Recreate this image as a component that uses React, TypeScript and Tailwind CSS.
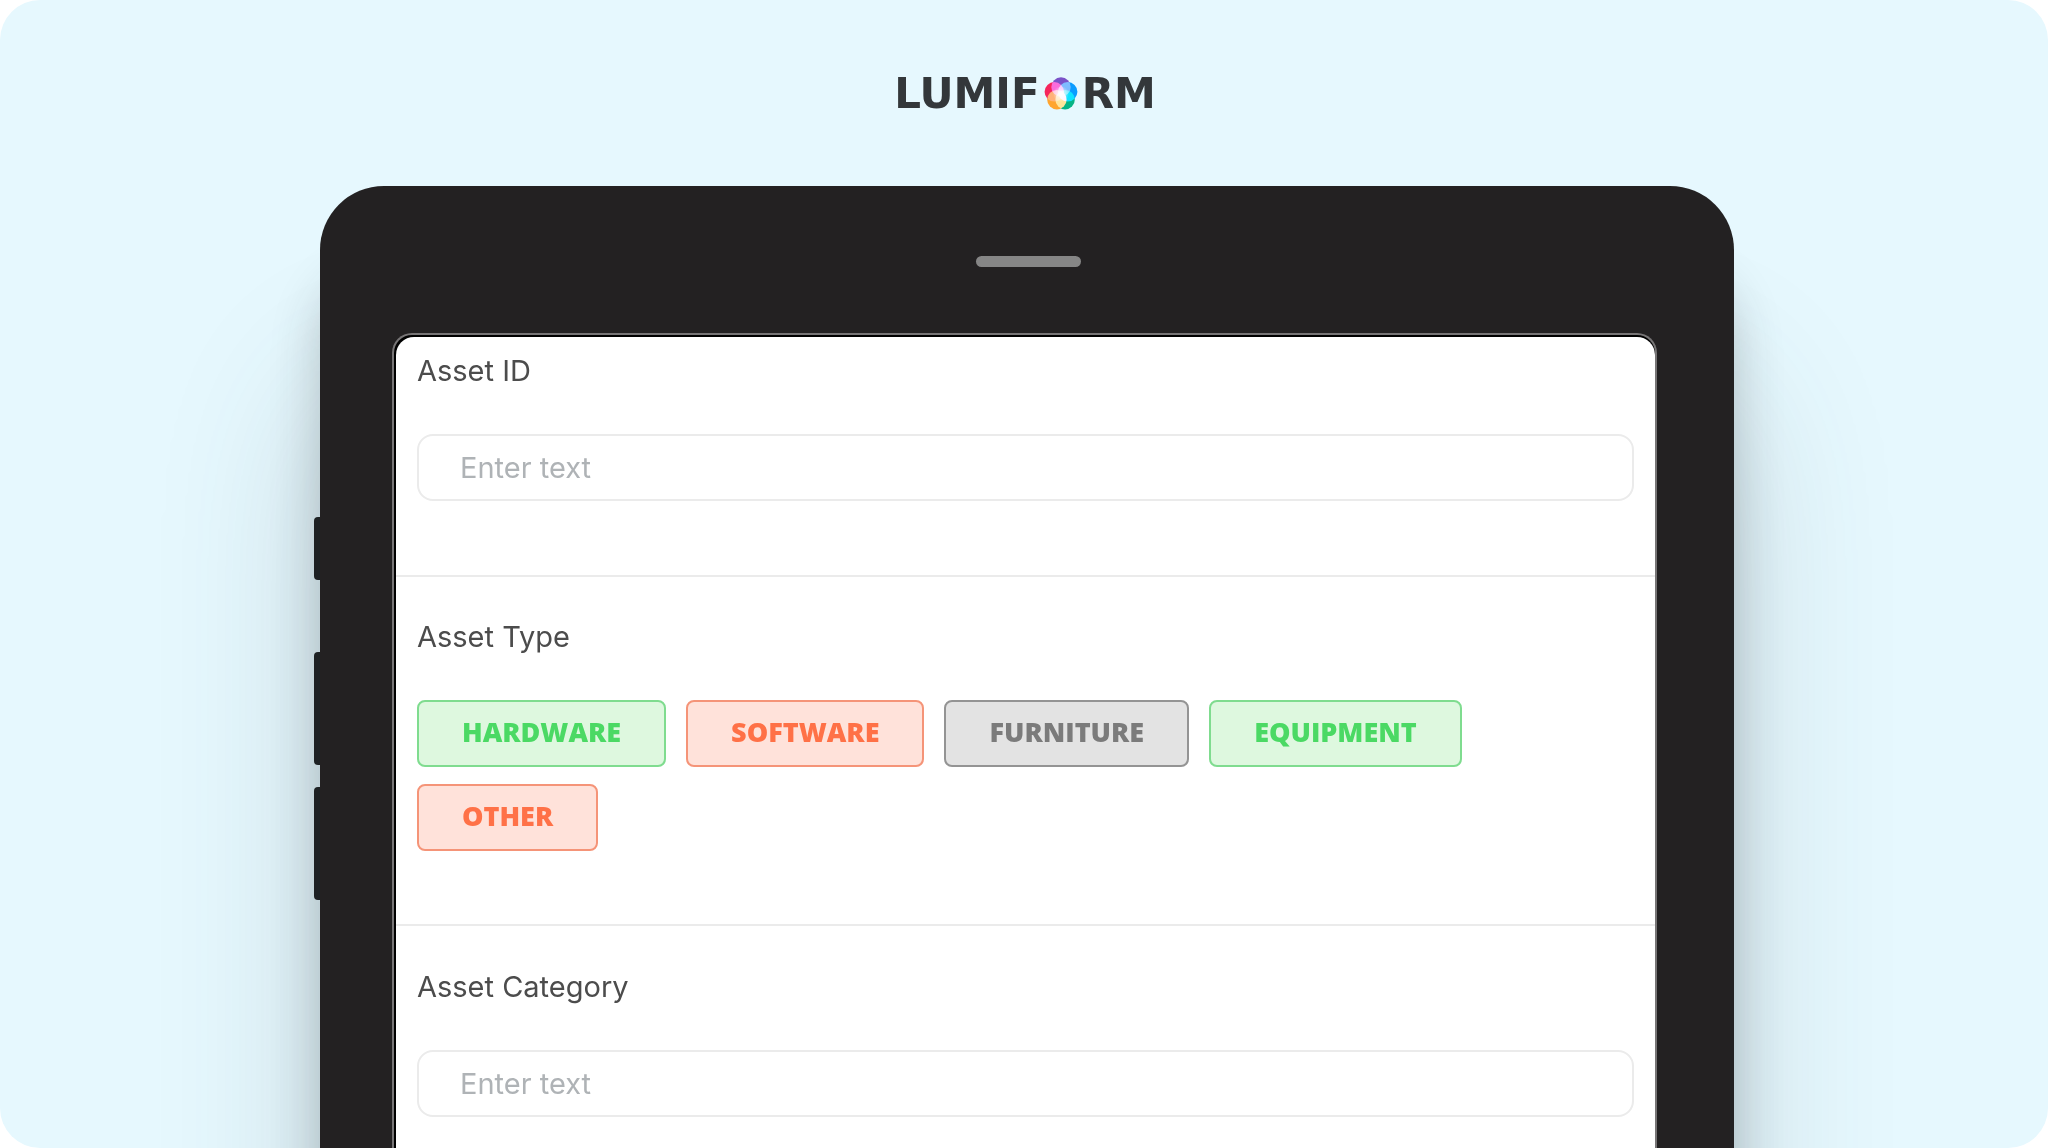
import { useState } from "react";

type Tone = "green" | "orange" | "gray";

const toneClasses: Record<Tone, string> = {
  green: "border-[#7fdc8f] bg-[#def8df] text-[#4bd964]",
  orange: "border-[#f59478] bg-[#ffe2da] text-[#ff7147]",
  gray: "border-[#949494] bg-[#e3e3e3] text-[#7b7b7b]",
};

const assetTypes: { label: string; tone: Tone }[] = [
  { label: "HARDWARE", tone: "green" },
  { label: "SOFTWARE", tone: "orange" },
  { label: "FURNITURE", tone: "gray" },
  { label: "EQUIPMENT", tone: "green" },
  { label: "OTHER", tone: "orange" },
];

/* Five overlapping discs whose overlaps lighten towards a white centre */
const petals = [
  { cx: 17, cy: 10, fill: "#7a52c8" },
  { cx: 23.7, cy: 14.8, fill: "#0a9cff" },
  { cx: 21.1, cy: 22.7, fill: "#06b485" },
  { cx: 12.9, cy: 22.7, fill: "#ffa52e" },
  { cx: 10.3, cy: 14.8, fill: "#f5265c" },
];

function LogoMark() {
  return (
    <svg viewBox="0 0 34 34" className="h-[34px] w-[34px]" aria-hidden="true">
      <defs>
        <radialGradient id="glow">
          <stop offset="0" stopColor="#fff" />
          <stop offset="0.35" stopColor="#fff" stopOpacity="0.6" />
          <stop offset="1" stopColor="#fff" stopOpacity="0" />
        </radialGradient>
      </defs>
      <g className="isolate">
        {petals.map((petal) => (
          <circle key={petal.fill} {...petal} r="9.7" className="mix-blend-screen" />
        ))}
      </g>
      <circle cx="17" cy="17" r="8" fill="url(#glow)" />
    </svg>
  );
}

function Logo() {
  return (
    <h1
      aria-label="Lumiform"
      className="flex items-center justify-center gap-1 pl-0.5 font-['DejaVu_Sans',sans-serif] text-[42px] leading-[60px] font-bold text-[#33373a]"
    >
      <span>LUMIF</span>
      <LogoMark />
      <span>RM</span>
    </h1>
  );
}

function TextField({ id, label }: { id: string; label: string }) {
  return (
    <div>
      <label htmlFor={id} className="block text-[29px] leading-9 text-[#4c4c4c]">
        {label}
      </label>
      <input
        id={id}
        type="text"
        placeholder="Enter text"
        className="mt-[45px] block h-[67px] w-full rounded-2xl border-2 border-[#ebebeb] bg-white px-[41px] text-[29px] text-[#4c4c4c] outline-none placeholder:text-[#afb3b6]"
      />
    </div>
  );
}

function AssetTypeField() {
  const [selected, setSelected] = useState<string | null>(null);
  return (
    <fieldset>
      <legend className="text-[29px] leading-9 text-[#4c4c4c]">Asset Type</legend>
      <div className="mt-[45px] flex flex-wrap gap-x-5 gap-y-[17px] pr-40">
        {assetTypes.map(({ label, tone }) => (
          <button
            key={label}
            type="button"
            aria-pressed={selected === label}
            onClick={() => setSelected(label)}
            className={`h-[67px] rounded-lg border-2 px-[43px] pb-1 font-['Open_Sans',sans-serif] text-[27px] leading-9 font-extrabold ${toneClasses[tone]}`}
          >
            {label}
          </button>
        ))}
      </div>
    </fieldset>
  );
}

export default function App() {
  return (
    <div className="h-screen overflow-hidden bg-white font-['Inter',sans-serif]">
      <main className="h-full overflow-hidden rounded-[40px] bg-[#e6f8fe] pt-16">
        <Logo />
        <div className="mt-[62px] flex justify-center pl-1.5">
          <div className="relative w-[69.25%] rounded-t-[64px] bg-[#232122] pr-[77px] pl-[72px] shadow-[0_90px_50px_0_rgba(40,45,45,0.24),0_200px_165px_0_rgba(60,75,80,0.2)]">
            {/* Side keys on the tablet's left edge */}
            <div className="absolute top-[331px] -left-1.5 flex flex-col">
              <span className="h-[63px] w-1.5 rounded-l-sm bg-[#1d2123]" />
              <span className="mt-[72px] h-[113px] w-1.5 rounded-l-sm bg-[#1d2123]" />
              <span className="mt-[22px] h-[113px] w-1.5 rounded-l-sm bg-[#1d2123]" />
            </div>
            <div className="flex h-[147px] justify-center pt-[70px] pl-2">
              <span className="h-[11px] w-[105px] rounded-full bg-[#868686]" />
            </div>
            <div className="overflow-hidden rounded-t-[20px] border-2 border-b-0 border-[#777576] bg-black">
              <form
                className="mt-0.5 ml-0.5 rounded-t-[18px] bg-white"
                onSubmit={(event) => event.preventDefault()}
              >
                <section className="border-b-2 border-[#ebebeb] px-[21px] pt-4 pb-[74px]">
                  <TextField id="asset-id" label="Asset ID" />
                </section>
                <section className="border-b-2 border-[#ebebeb] px-[21px] pt-[42px] pb-[73px]">
                  <AssetTypeField />
                </section>
                <section className="px-[21px] pt-[43px] pb-80">
                  <TextField id="asset-category" label="Asset Category" />
                </section>
              </form>
            </div>
          </div>
        </div>
      </main>
    </div>
  );
}
